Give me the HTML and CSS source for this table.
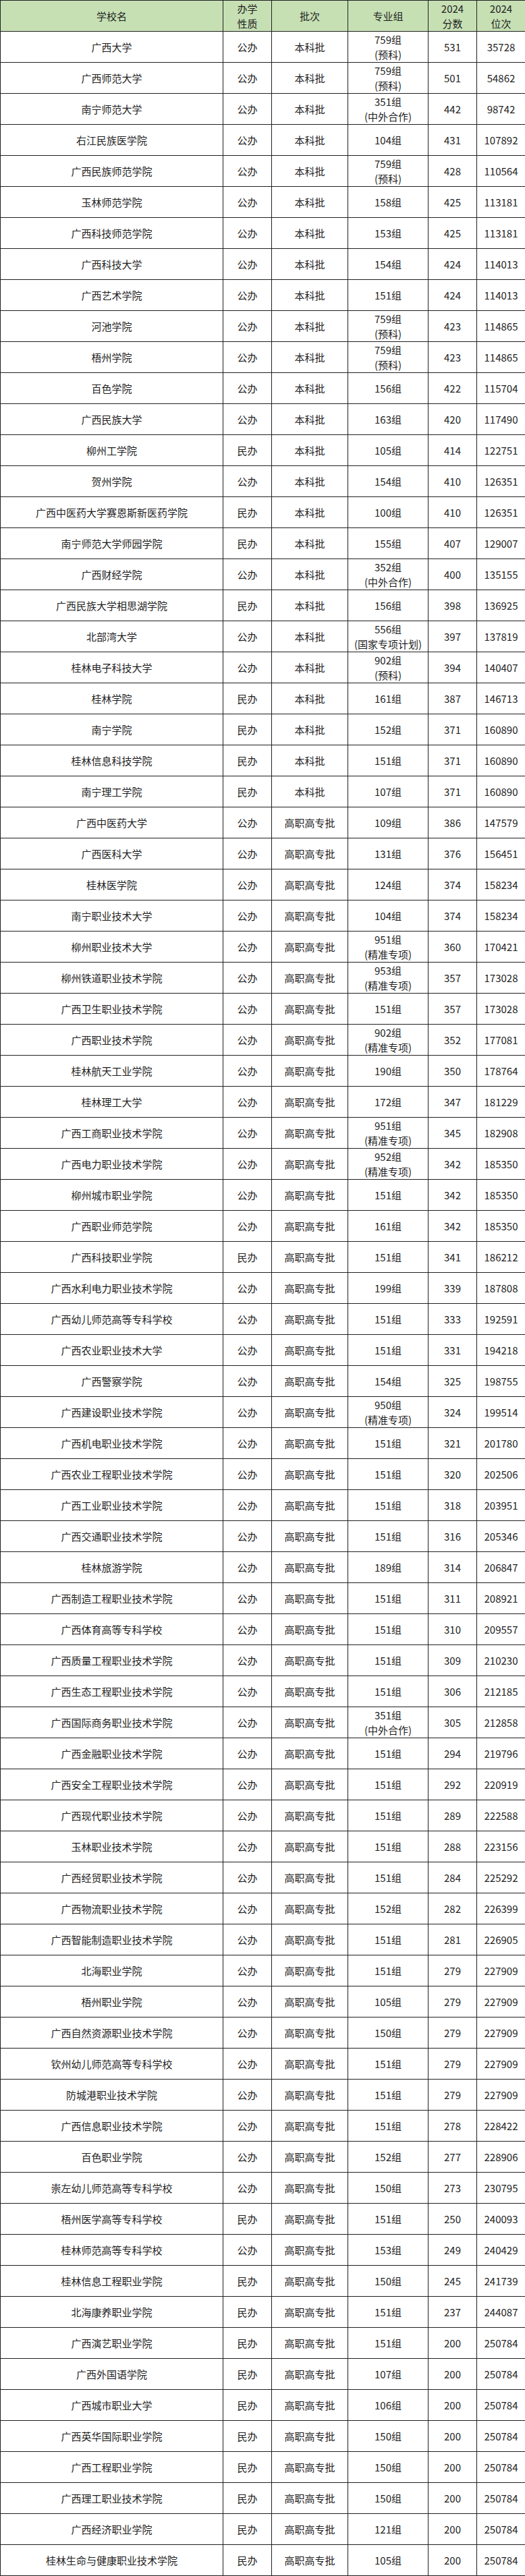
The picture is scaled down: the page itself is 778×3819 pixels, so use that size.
FILE: index.html
```html
<!DOCTYPE html>
<html lang="zh-CN">
<head>
<meta charset="utf-8">
<title>广西院校2024分数位次</title>
<link rel="stylesheet" href="styles.css">
</head>
<body>
<table class="score-table">
<colgroup>
<col class="c-name"><col class="c-type"><col class="c-batch"><col class="c-group"><col class="c-score"><col class="c-rank">
</colgroup>
<thead>
<tr><th>学校名</th><th>办学<br>性质</th><th>批次</th><th>专业组</th><th>2024<br>分数</th><th>2024<br>位次</th></tr>
</thead>
<tbody>
<tr><td>广西大学</td><td>公办</td><td>本科批</td><td>759组<br>(预科)</td><td>531</td><td>35728</td></tr>
<tr><td>广西师范大学</td><td>公办</td><td>本科批</td><td>759组<br>(预科)</td><td>501</td><td>54862</td></tr>
<tr><td>南宁师范大学</td><td>公办</td><td>本科批</td><td>351组<br>(中外合作)</td><td>442</td><td>98742</td></tr>
<tr><td>右江民族医学院</td><td>公办</td><td>本科批</td><td>104组</td><td>431</td><td>107892</td></tr>
<tr><td>广西民族师范学院</td><td>公办</td><td>本科批</td><td>759组<br>(预科)</td><td>428</td><td>110564</td></tr>
<tr><td>玉林师范学院</td><td>公办</td><td>本科批</td><td>158组</td><td>425</td><td>113181</td></tr>
<tr><td>广西科技师范学院</td><td>公办</td><td>本科批</td><td>153组</td><td>425</td><td>113181</td></tr>
<tr><td>广西科技大学</td><td>公办</td><td>本科批</td><td>154组</td><td>424</td><td>114013</td></tr>
<tr><td>广西艺术学院</td><td>公办</td><td>本科批</td><td>151组</td><td>424</td><td>114013</td></tr>
<tr><td>河池学院</td><td>公办</td><td>本科批</td><td>759组<br>(预科)</td><td>423</td><td>114865</td></tr>
<tr><td>梧州学院</td><td>公办</td><td>本科批</td><td>759组<br>(预科)</td><td>423</td><td>114865</td></tr>
<tr><td>百色学院</td><td>公办</td><td>本科批</td><td>156组</td><td>422</td><td>115704</td></tr>
<tr><td>广西民族大学</td><td>公办</td><td>本科批</td><td>163组</td><td>420</td><td>117490</td></tr>
<tr><td>柳州工学院</td><td>民办</td><td>本科批</td><td>105组</td><td>414</td><td>122751</td></tr>
<tr><td>贺州学院</td><td>公办</td><td>本科批</td><td>154组</td><td>410</td><td>126351</td></tr>
<tr><td>广西中医药大学赛恩斯新医药学院</td><td>民办</td><td>本科批</td><td>100组</td><td>410</td><td>126351</td></tr>
<tr><td>南宁师范大学师园学院</td><td>民办</td><td>本科批</td><td>155组</td><td>407</td><td>129007</td></tr>
<tr><td>广西财经学院</td><td>公办</td><td>本科批</td><td>352组<br>(中外合作)</td><td>400</td><td>135155</td></tr>
<tr><td>广西民族大学相思湖学院</td><td>民办</td><td>本科批</td><td>156组</td><td>398</td><td>136925</td></tr>
<tr><td>北部湾大学</td><td>公办</td><td>本科批</td><td>556组<br>(国家专项计划)</td><td>397</td><td>137819</td></tr>
<tr><td>桂林电子科技大学</td><td>公办</td><td>本科批</td><td>902组<br>(预科)</td><td>394</td><td>140407</td></tr>
<tr><td>桂林学院</td><td>民办</td><td>本科批</td><td>161组</td><td>387</td><td>146713</td></tr>
<tr><td>南宁学院</td><td>民办</td><td>本科批</td><td>152组</td><td>371</td><td>160890</td></tr>
<tr><td>桂林信息科技学院</td><td>民办</td><td>本科批</td><td>151组</td><td>371</td><td>160890</td></tr>
<tr><td>南宁理工学院</td><td>民办</td><td>本科批</td><td>107组</td><td>371</td><td>160890</td></tr>
<tr><td>广西中医药大学</td><td>公办</td><td>高职高专批</td><td>109组</td><td>386</td><td>147579</td></tr>
<tr><td>广西医科大学</td><td>公办</td><td>高职高专批</td><td>131组</td><td>376</td><td>156451</td></tr>
<tr><td>桂林医学院</td><td>公办</td><td>高职高专批</td><td>124组</td><td>374</td><td>158234</td></tr>
<tr><td>南宁职业技术大学</td><td>公办</td><td>高职高专批</td><td>104组</td><td>374</td><td>158234</td></tr>
<tr><td>柳州职业技术大学</td><td>公办</td><td>高职高专批</td><td>951组<br>(精准专项)</td><td>360</td><td>170421</td></tr>
<tr><td>柳州铁道职业技术学院</td><td>公办</td><td>高职高专批</td><td>953组<br>(精准专项)</td><td>357</td><td>173028</td></tr>
<tr><td>广西卫生职业技术学院</td><td>公办</td><td>高职高专批</td><td>151组</td><td>357</td><td>173028</td></tr>
<tr><td>广西职业技术学院</td><td>公办</td><td>高职高专批</td><td>902组<br>(精准专项)</td><td>352</td><td>177081</td></tr>
<tr><td>桂林航天工业学院</td><td>公办</td><td>高职高专批</td><td>190组</td><td>350</td><td>178764</td></tr>
<tr><td>桂林理工大学</td><td>公办</td><td>高职高专批</td><td>172组</td><td>347</td><td>181229</td></tr>
<tr><td>广西工商职业技术学院</td><td>公办</td><td>高职高专批</td><td>951组<br>(精准专项)</td><td>345</td><td>182908</td></tr>
<tr><td>广西电力职业技术学院</td><td>公办</td><td>高职高专批</td><td>952组<br>(精准专项)</td><td>342</td><td>185350</td></tr>
<tr><td>柳州城市职业学院</td><td>公办</td><td>高职高专批</td><td>151组</td><td>342</td><td>185350</td></tr>
<tr><td>广西职业师范学院</td><td>公办</td><td>高职高专批</td><td>161组</td><td>342</td><td>185350</td></tr>
<tr><td>广西科技职业学院</td><td>民办</td><td>高职高专批</td><td>151组</td><td>341</td><td>186212</td></tr>
<tr><td>广西水利电力职业技术学院</td><td>公办</td><td>高职高专批</td><td>199组</td><td>339</td><td>187808</td></tr>
<tr><td>广西幼儿师范高等专科学校</td><td>公办</td><td>高职高专批</td><td>151组</td><td>333</td><td>192591</td></tr>
<tr><td>广西农业职业技术大学</td><td>公办</td><td>高职高专批</td><td>151组</td><td>331</td><td>194218</td></tr>
<tr><td>广西警察学院</td><td>公办</td><td>高职高专批</td><td>154组</td><td>325</td><td>198755</td></tr>
<tr><td>广西建设职业技术学院</td><td>公办</td><td>高职高专批</td><td>950组<br>(精准专项)</td><td>324</td><td>199514</td></tr>
<tr><td>广西机电职业技术学院</td><td>公办</td><td>高职高专批</td><td>151组</td><td>321</td><td>201780</td></tr>
<tr><td>广西农业工程职业技术学院</td><td>公办</td><td>高职高专批</td><td>151组</td><td>320</td><td>202506</td></tr>
<tr><td>广西工业职业技术学院</td><td>公办</td><td>高职高专批</td><td>151组</td><td>318</td><td>203951</td></tr>
<tr><td>广西交通职业技术学院</td><td>公办</td><td>高职高专批</td><td>151组</td><td>316</td><td>205346</td></tr>
<tr><td>桂林旅游学院</td><td>公办</td><td>高职高专批</td><td>189组</td><td>314</td><td>206847</td></tr>
<tr><td>广西制造工程职业技术学院</td><td>公办</td><td>高职高专批</td><td>151组</td><td>311</td><td>208921</td></tr>
<tr><td>广西体育高等专科学校</td><td>公办</td><td>高职高专批</td><td>151组</td><td>310</td><td>209557</td></tr>
<tr><td>广西质量工程职业技术学院</td><td>公办</td><td>高职高专批</td><td>151组</td><td>309</td><td>210230</td></tr>
<tr><td>广西生态工程职业技术学院</td><td>公办</td><td>高职高专批</td><td>151组</td><td>306</td><td>212185</td></tr>
<tr><td>广西国际商务职业技术学院</td><td>公办</td><td>高职高专批</td><td>351组<br>(中外合作)</td><td>305</td><td>212858</td></tr>
<tr><td>广西金融职业技术学院</td><td>公办</td><td>高职高专批</td><td>151组</td><td>294</td><td>219796</td></tr>
<tr><td>广西安全工程职业技术学院</td><td>公办</td><td>高职高专批</td><td>151组</td><td>292</td><td>220919</td></tr>
<tr><td>广西现代职业技术学院</td><td>公办</td><td>高职高专批</td><td>151组</td><td>289</td><td>222588</td></tr>
<tr><td>玉林职业技术学院</td><td>公办</td><td>高职高专批</td><td>151组</td><td>288</td><td>223156</td></tr>
<tr><td>广西经贸职业技术学院</td><td>公办</td><td>高职高专批</td><td>151组</td><td>284</td><td>225292</td></tr>
<tr><td>广西物流职业技术学院</td><td>公办</td><td>高职高专批</td><td>152组</td><td>282</td><td>226399</td></tr>
<tr><td>广西智能制造职业技术学院</td><td>公办</td><td>高职高专批</td><td>151组</td><td>281</td><td>226905</td></tr>
<tr><td>北海职业学院</td><td>公办</td><td>高职高专批</td><td>151组</td><td>279</td><td>227909</td></tr>
<tr><td>梧州职业学院</td><td>公办</td><td>高职高专批</td><td>105组</td><td>279</td><td>227909</td></tr>
<tr><td>广西自然资源职业技术学院</td><td>公办</td><td>高职高专批</td><td>150组</td><td>279</td><td>227909</td></tr>
<tr><td>钦州幼儿师范高等专科学校</td><td>公办</td><td>高职高专批</td><td>151组</td><td>279</td><td>227909</td></tr>
<tr><td>防城港职业技术学院</td><td>公办</td><td>高职高专批</td><td>151组</td><td>279</td><td>227909</td></tr>
<tr><td>广西信息职业技术学院</td><td>公办</td><td>高职高专批</td><td>151组</td><td>278</td><td>228422</td></tr>
<tr><td>百色职业学院</td><td>公办</td><td>高职高专批</td><td>152组</td><td>277</td><td>228906</td></tr>
<tr><td>崇左幼儿师范高等专科学校</td><td>公办</td><td>高职高专批</td><td>150组</td><td>273</td><td>230795</td></tr>
<tr><td>梧州医学高等专科学校</td><td>民办</td><td>高职高专批</td><td>151组</td><td>250</td><td>240093</td></tr>
<tr><td>桂林师范高等专科学校</td><td>公办</td><td>高职高专批</td><td>153组</td><td>249</td><td>240429</td></tr>
<tr><td>桂林信息工程职业学院</td><td>民办</td><td>高职高专批</td><td>150组</td><td>245</td><td>241739</td></tr>
<tr><td>北海康养职业学院</td><td>民办</td><td>高职高专批</td><td>151组</td><td>237</td><td>244087</td></tr>
<tr><td>广西演艺职业学院</td><td>民办</td><td>高职高专批</td><td>151组</td><td>200</td><td>250784</td></tr>
<tr><td>广西外国语学院</td><td>民办</td><td>高职高专批</td><td>107组</td><td>200</td><td>250784</td></tr>
<tr><td>广西城市职业大学</td><td>民办</td><td>高职高专批</td><td>106组</td><td>200</td><td>250784</td></tr>
<tr><td>广西英华国际职业学院</td><td>民办</td><td>高职高专批</td><td>150组</td><td>200</td><td>250784</td></tr>
<tr><td>广西工程职业学院</td><td>民办</td><td>高职高专批</td><td>150组</td><td>200</td><td>250784</td></tr>
<tr><td>广西理工职业技术学院</td><td>民办</td><td>高职高专批</td><td>150组</td><td>200</td><td>250784</td></tr>
<tr><td>广西经济职业学院</td><td>民办</td><td>高职高专批</td><td>121组</td><td>200</td><td>250784</td></tr>
<tr><td>桂林生命与健康职业技术学院</td><td>民办</td><td>高职高专批</td><td>105组</td><td>200</td><td>250784</td></tr>
</tbody>
</table>
</body>
</html>
```
FILE: styles.css
```css
html, body {
  margin: 0;
  padding: 0;
  background: #ffffff;
}

.score-table {
  width: 778px;
  border-collapse: collapse;
  table-layout: fixed;
  font-family: "Noto Sans CJK SC", "Noto Sans", sans-serif;
  font-size: 15px;
  line-height: 22px;
  color: #1e1e1e;
}

.c-name { width: 330px; }
.c-type { width: 72px; }
.c-batch { width: 113px; }
.c-group { width: 119px; }
.c-score { width: 72px; }
.c-rank { width: 72px; }

.score-table tr {
  height: 46px;
}

.score-table th,
.score-table td {
  border: 1px solid #202020;
  padding: 0;
  text-align: center;
  vertical-align: middle;
  font-weight: normal;
  white-space: nowrap;
}

.score-table thead th {
  background: #c6e0b4;
}
```
